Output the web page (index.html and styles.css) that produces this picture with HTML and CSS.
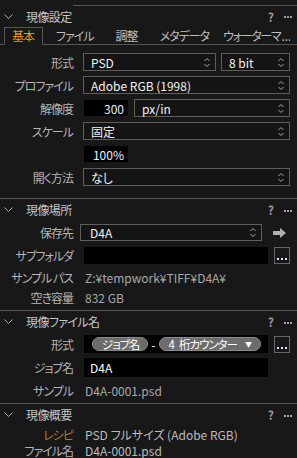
FILE: index.html
```html
<!DOCTYPE html>
<html lang="ja">

<head>
    <meta charset="UTF-8">
    <meta name="viewport" content="width=device-width, initial-scale=1.0">
    <title>現像設定</title>
    <link rel="stylesheet" href="styles.css">
</head>

<body>
    <div class="panel">

        <!-- 現像設定 -->
        <section class="section">
            <div class="section-head first">
                <svg class="chevron" width="9" height="5" viewBox="0 0 9 5"><polyline points="0.5,0.5 4.5,4.5 8.5,0.5" /></svg>
                <span class="section-title">現像設定</span>
                <span class="head-tools"><span class="help">?</span><svg class="more" width="8" height="2" viewBox="0 0 8 2"><rect x="0" width="2" height="2" /><rect x="3" width="2" height="2" /><rect x="6" width="2" height="2" /></svg></span>
            </div>
            <div class="tabs">
                <span class="tab active">基本</span>
                <span class="tab">ファイル</span>
                <span class="tab">調整</span>
                <span class="tab">メタデータ</span>
                <span class="tab last">ウォーターマ<span class="more-dots">...</span></span>
            </div>
            <div class="form basic">
                <span class="label">形式</span>
                <div class="control">
                    <div class="select grow">PSD<svg class="updown" width="6" height="11" viewBox="0 0 6 11"><polyline points="0.5,4 3,1.5 5.5,4" /><polyline points="0.5,7 3,9.5 5.5,7" /></svg></div>
                    <div class="select bit">8 bit<svg class="updown" width="6" height="11" viewBox="0 0 6 11"><polyline points="0.5,4 3,1.5 5.5,4" /><polyline points="0.5,7 3,9.5 5.5,7" /></svg></div>
                </div>

                <span class="label">プロファイル</span>
                <div class="control">
                    <div class="select grow">Adobe RGB (1998)<svg class="updown" width="6" height="11" viewBox="0 0 6 11"><polyline points="0.5,4 3,1.5 5.5,4" /><polyline points="0.5,7 3,9.5 5.5,7" /></svg></div>
                </div>

                <span class="label">解像度</span>
                <div class="control">
                    <div class="field num">300</div>
                    <div class="select grow">px/in<svg class="updown" width="6" height="11" viewBox="0 0 6 11"><polyline points="0.5,4 3,1.5 5.5,4" /><polyline points="0.5,7 3,9.5 5.5,7" /></svg></div>
                </div>

                <span class="label">スケール</span>
                <div class="control">
                    <div class="select grow">固定<svg class="updown" width="6" height="11" viewBox="0 0 6 11"><polyline points="0.5,4 3,1.5 5.5,4" /><polyline points="0.5,7 3,9.5 5.5,7" /></svg></div>
                </div>

                <span class="label"></span>
                <div class="control">
                    <div class="field num">100%</div>
                </div>

                <span class="label">開く方法</span>
                <div class="control">
                    <div class="select grow">なし<svg class="updown" width="6" height="11" viewBox="0 0 6 11"><polyline points="0.5,4 3,1.5 5.5,4" /><polyline points="0.5,7 3,9.5 5.5,7" /></svg></div>
                </div>
            </div>
        </section>

        <!-- 現像場所 -->
        <section class="section">
            <div class="section-head">
                <svg class="chevron" width="9" height="5" viewBox="0 0 9 5"><polyline points="0.5,0.5 4.5,4.5 8.5,0.5" /></svg>
                <span class="section-title">現像場所</span>
                <span class="head-tools"><span class="help">?</span><svg class="more" width="8" height="2" viewBox="0 0 8 2"><rect x="0" width="2" height="2" /><rect x="3" width="2" height="2" /><rect x="6" width="2" height="2" /></svg></span>
            </div>
            <div class="form place">
                <span class="label">保存先</span>
                <div class="control">
                    <div class="select grow shift">D4A<svg class="updown" width="6" height="11" viewBox="0 0 6 11"><polyline points="0.5,4 3,1.5 5.5,4" /><polyline points="0.5,7 3,9.5 5.5,7" /></svg></div>
                    <span class="go"><svg width="14" height="10" viewBox="0 0 14 10"><path d="M0 3h7V0l6 5-6 5V7H0z" /></svg></span>
                </div>

                <span class="label">サブフォルダ</span>
                <div class="control">
                    <div class="field grow"></div>
                    <span class="dots-btn"><svg width="10" height="2" viewBox="0 0 10 2"><rect x="0" width="2" height="2" /><rect x="4" width="2" height="2" /><rect x="8" width="2" height="2" /></svg></span>
                </div>

                <span class="label text-row">サンプル パス</span>
                <span class="value text-row">Z:¥tempwork¥TIFF¥D4A¥</span>

                <span class="label text-row">空き容量</span>
                <span class="value text-row">832 GB</span>
            </div>
        </section>

        <!-- 現像ファイル名 -->
        <section class="section">
            <div class="section-head">
                <svg class="chevron" width="9" height="5" viewBox="0 0 9 5"><polyline points="0.5,0.5 4.5,4.5 8.5,0.5" /></svg>
                <span class="section-title">現像ファイル名</span>
                <span class="head-tools"><span class="help">?</span><svg class="more" width="8" height="2" viewBox="0 0 8 2"><rect x="0" width="2" height="2" /><rect x="3" width="2" height="2" /><rect x="6" width="2" height="2" /></svg></span>
            </div>
            <div class="form naming">
                <span class="label">形式</span>
                <div class="control">
                    <div class="field grow tokens">
                        <span class="pill">ジョブ名</span>
                        <span class="dash">-</span>
                        <span class="pill">4<span class="gap"></span>桁カウンター<span class="caret">&#9660;</span></span>
                    </div>
                    <span class="dots-btn"><svg width="10" height="2" viewBox="0 0 10 2"><rect x="0" width="2" height="2" /><rect x="4" width="2" height="2" /><rect x="8" width="2" height="2" /></svg></span>
                </div>

                <span class="label">ジョブ名</span>
                <div class="control">
                    <div class="field grow job">D4A</div>
                    <span class="spacer"></span>
                </div>

                <span class="label text-row">サンプル</span>
                <span class="value text-row">D4A-0001.psd</span>
            </div>
        </section>

        <!-- 現像概要 -->
        <section class="section">
            <div class="section-head">
                <svg class="chevron" width="9" height="5" viewBox="0 0 9 5"><polyline points="0.5,0.5 4.5,4.5 8.5,0.5" /></svg>
                <span class="section-title">現像概要</span>
                <span class="head-tools"><span class="help">?</span><svg class="more" width="8" height="2" viewBox="0 0 8 2"><rect x="0" width="2" height="2" /><rect x="3" width="2" height="2" /><rect x="6" width="2" height="2" /></svg></span>
            </div>
            <div class="form summary">
                <span class="label recipe">レシピ</span>
                <span class="value">PSD フルサイズ (Adobe RGB)</span>

                <span class="label">ファイル名</span>
                <span class="value">D4A-0001.psd</span>
            </div>
        </section>

    </div>
</body>

</html>
```

FILE: styles.css
```css
/* Global */
* {
    box-sizing: border-box;
}

body {
    margin: 0;
    background-color: #181818;
    color: #b8b8b8;
    font-family: "Noto Sans CJK JP", sans-serif;
    font-size: 12px;
    font-feature-settings: "palt" 1;
    overflow: hidden;
}

.panel {
    width: 297px;
    padding-top: 5px;
}

/* Section header */
.section-head {
    display: flex;
    align-items: center;
    height: 22px;
    border-top: 1px solid #555;
    padding-right: 5px;
}

.section-head.first {
    height: 21px;
    border-top: none;
    padding-top: 1px;
    background: linear-gradient(#555, #555) 73px 0 / 100% 1px no-repeat;
}

.chevron {
    margin-left: 4px;
    margin-right: 13px;
    fill: none;
    stroke: #aaa;
    stroke-width: 1;
}

.section-title {
    color: #c6c6c6;
    letter-spacing: -0.6px;
}

.head-tools {
    margin-left: auto;
    display: flex;
    align-items: center;
    gap: 10px;
}

.help {
    font-weight: bold;
    color: #9a9a9a;
    font-size: 12px;
}

.more {
    fill: #a0a0a0;
    margin-top: 2px;
}

/* Tabs */
.tabs {
    display: flex;
    height: 19px;
    padding-left: 4px;
    padding-right: 6px;
    border-bottom: 1px solid #555;
}

.tab {
    margin-top: 1px;
    height: 18px;
    line-height: 16px;
    padding: 0 6px;
    margin-right: 8px;
    border: 1px solid transparent;
    color: #bdbdbd;
    white-space: nowrap;
    letter-spacing: -1px;
    flex: none;
}

.tab.active {
    color: #f39200;
    border-color: #555;
    border-bottom-color: #181818;
    padding: 0 8px 0 7px;
    margin-right: 6px;
}

.tab.last {
    flex: 0 1 auto;
    min-width: 0;
    overflow: hidden;
    margin-left: -8px;
    margin-right: 0;
    padding-right: 0;
    letter-spacing: -1.3px;
}

.more-dots {
    letter-spacing: 0;
    margin-left: 1px;
}

/* Forms */
.form {
    display: grid;
    grid-template-columns: 73px 1fr;
    column-gap: 10px;
    align-items: center;
    padding-right: 7px;
}

.form.basic {
    padding-top: 8px;
    padding-bottom: 12px;
    row-gap: 5px;
    grid-auto-rows: 18px;
}

.form.place {
    padding-top: 4px;
    padding-bottom: 6px;
    row-gap: 6px;
    grid-template-rows: 17px 17px 14px 14px;
}

.form.naming {
    padding-top: 3px;
    padding-bottom: 5px;
    row-gap: 5px;
    grid-template-rows: 18px 19px 16px;
}

.form.summary {
    padding-top: 1px;
    grid-auto-rows: 16px;
}

.label {
    text-align: right;
    white-space: nowrap;
    color: #b4b4b4;
    letter-spacing: -1px;
}

.label.recipe {
    color: #b8763a;
}

.value {
    padding-left: 2px;
    color: #a8a8a8;
    white-space: nowrap;
}

.summary .value {
    color: #bcbcbc;
}

.control {
    display: flex;
    align-items: center;
    gap: 6px;
    height: 100%;
    min-width: 0;
}

/* Select box */
.select {
    display: flex;
    align-items: center;
    height: 100%;
    border: 1px solid #5e5e5e;
    background-color: #141414;
    color: #f2f2f2;
    padding: 0 5px 0 7px;
    white-space: nowrap;
}

.select.grow {
    flex: 1;
}

.select.shift {
    margin-left: -3px;
    padding-left: 9px;
}

.select.bit {
    width: 69px;
    margin-left: -1px;
}

.updown {
    margin-left: auto;
    fill: none;
    stroke: #a8a8a8;
    stroke-width: 1;
}

/* Black input field */
.field {
    height: 100%;
    background-color: #000;
    color: #fff;
    display: flex;
    align-items: center;
    margin-left: 1px;
    min-width: 0;
    overflow: hidden;
}

.field.num {
    width: 44px;
    justify-content: flex-end;
    padding-right: 4px;
    height: 16px;
    color: #e8f0ff;
}

.field.grow {
    flex: 1;
}

.field.job {
    padding-left: 6px;
}

.spacer {
    width: 16px;
    flex: none;
}

/* Side buttons */
.go {
    width: 22px;
    flex: none;
    display: flex;
    justify-content: center;
    padding-left: 2px;
}

.go svg {
    fill: #b0b0b0;
}

.dots-btn {
    width: 16px;
    height: 17px;
    flex: none;
    border: 1px solid #666;
    display: flex;
    align-items: flex-end;
    justify-content: center;
    padding-bottom: 3px;
}

.dots-btn svg {
    fill: #dde6f2;
}

/* Name tokens */
.tokens {
    padding-left: 8px;
}

.pill {
    display: inline-flex;
    align-items: center;
    flex: none;
    height: 14px;
    padding: 0 8px 0 9px;
    border-radius: 7px;
    background-color: #6c6c6c;
    border: 1px solid #8a8a8a;
    color: #fff;
    font-size: 11.5px;
    letter-spacing: -1px;
    white-space: nowrap;
}

.pill .gap {
    width: 5px;
}

.dash {
    color: #fff;
    margin: 0 3px;
}

.caret {
    font-size: 7px;
    margin-left: 8px;
    letter-spacing: 0;
}
```
